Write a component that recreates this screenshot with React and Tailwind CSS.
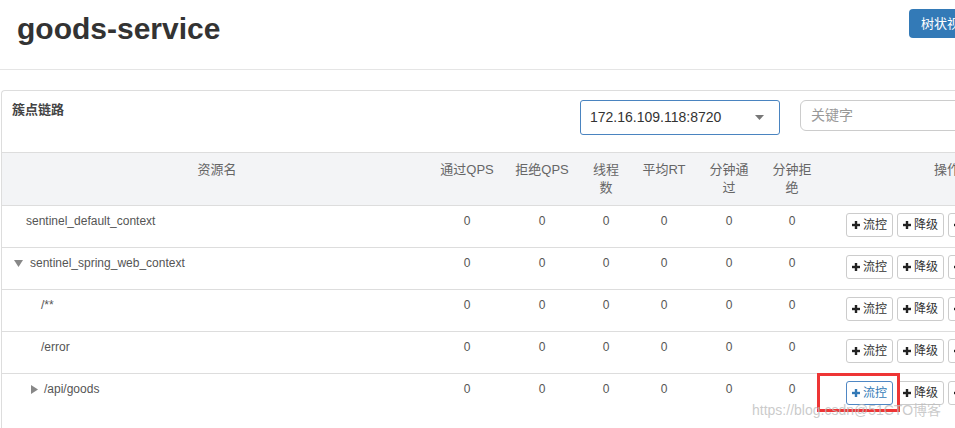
const font = { fontFamily: '"Liberation Sans", "Noto Sans CJK SC", sans-serif' };

const rows = [
  { name: 'sentinel_default_context', cell: 'pl-[24px]', arrow: null },
  { name: 'sentinel_spring_web_context', cell: 'pl-[12px]', arrow: 'down' },
  { name: '/**', cell: 'pl-[39px]', arrow: null },
  { name: '/error', cell: 'pl-[39px]', arrow: null },
  { name: '/api/goods', cell: 'pl-[29px]', arrow: 'right', active: true, last: true },
];

const cols = 'grid grid-cols-[430px_70px_80px_48px_68px_62px_64px_246px]';

const Plus = ({ className }) => (
  <svg width="8" height="8" viewBox="0 0 8 8" className={className}>
    <rect x="0" y="2.8" width="8" height="2.4" fill="currentColor" />
    <rect x="2.8" y="0" width="2.4" height="8" fill="currentColor" />
  </svg>
);

const OpButton = ({ label, active }) => (
  <button
    className={`flex items-center h-[24px] w-[47px] pl-[5px] gap-[3px] bg-white rounded-[3px] border text-[12px] leading-none ${
      active ? 'border-[#4f87c4] text-[#337ab7]' : 'border-[#cccccc] text-[#333]'
    }`}
  >
    <Plus className={active ? 'text-[#337ab7]' : 'text-[#222]'} />
    {label}
  </button>
);

const App = () => {
  return (
    <div className="relative w-[955px] h-[428px] overflow-hidden bg-white" style={font}>
      <div className="w-[1100px]">
        {/* page header */}
        <div className="flex items-start justify-between w-[1002px] h-[70px] px-[17px] border-b border-[#e5e5e5]">
          <h1 className="mt-[12px] text-[30px] leading-[33px] font-bold text-[#333]">goods-service</h1>
          <button className="mt-[9px] h-[29px] w-[76px] rounded-[4px] bg-[#337ab7] text-white text-[13px] text-left pl-[12px]">
            树状视图
          </button>
        </div>

        {/* panel */}
        <div className="mt-[20px] ml-[1px] border-t border-l border-[#dddddd] rounded-tl-[4px]">
          <div className="flex items-start h-[61px] pt-[9px] pl-[10px]">
            <div className="w-[568px] text-[13px] leading-[20px] font-bold text-[#444]">簇点链路</div>
            <div className="flex items-center justify-between w-[200px] h-[35px] pl-[9px] pr-[15px] rounded-[3px] border border-[#4a84c0] text-[14px] text-[#333]">
              <span>172.16.109.118:8720</span>
              <svg width="9" height="5" viewBox="0 0 9 5">
                <path d="M0 0 L9 0 L4.5 5 Z" fill="#777" />
              </svg>
            </div>
            <div className="ml-[20px] w-[200px] h-[31px] pl-[10px] flex items-center rounded-[6px] border border-[#cccccc] text-[14px] text-[#999]">
              关键字
            </div>
          </div>

          {/* table header */}
          <div className={`${cols} h-[54px] bg-[#f3f4f6] border-y border-[#dddddd] text-[13px] leading-[18px] text-[#666] text-center`}>
            <div className="pt-[8px]">资源名</div>
            <div className="pt-[8px] px-[8px]">通过QPS</div>
            <div className="pt-[8px] px-[8px]">拒绝QPS</div>
            <div className="pt-[8px] px-[8px]">线程数</div>
            <div className="pt-[8px] px-[8px]">平均RT</div>
            <div className="pt-[8px] px-[8px]">分钟通过</div>
            <div className="pt-[8px] px-[8px]">分钟拒绝</div>
            <div className="pt-[8px]">操作</div>
          </div>

          {/* table body */}
          {rows.map((r) => (
            <div
              key={r.name}
              className={`${cols} text-[12px] leading-[18px] text-[#555] ${
                r.last ? 'h-[60px]' : 'h-[42px] border-b border-[#dddddd]'
              }`}
            >
              <div className={`flex items-center h-[18px] mt-[6px] ${r.cell}`}>
                {r.arrow === 'down' && (
                  <svg width="9" height="7" viewBox="0 0 9 7" className="mr-[7px]">
                    <path d="M0 0 L9 0 L4.5 7 Z" fill="#888" />
                  </svg>
                )}
                {r.arrow === 'right' && (
                  <svg width="7" height="9" viewBox="0 0 7 9" className="mr-[6px]">
                    <path d="M0 0 L7 4.5 L0 9 Z" fill="#888" />
                  </svg>
                )}
                {r.name}
              </div>
              <div className="pt-[6px] text-center">0</div>
              <div className="pt-[6px] text-center">0</div>
              <div className="pt-[6px] text-center">0</div>
              <div className="pt-[6px] text-center">0</div>
              <div className="pt-[6px] text-center">0</div>
              <div className="pt-[6px] text-center">0</div>
              <div className="flex gap-[4px] pt-[7px] pl-[22px]">
                <OpButton label="流控" active={r.active} />
                <OpButton label="降级" />
                <OpButton label="热点" />
                <OpButton label="授权" />
              </div>
            </div>
          ))}
        </div>
      </div>

      {/* annotation box */}
      <div className="absolute left-[817px] top-[373px] w-[83px] h-[39px] border-[3px] border-[#ee3535]" />
      {/* watermark */}
      <div className="absolute left-[752px] top-[401px] text-[14px] leading-[18px] text-[#bdbdbd]/80 whitespace-nowrap">
        https://blog.csdn@51CTO博客
      </div>
    </div>
  );
};

export default App;
